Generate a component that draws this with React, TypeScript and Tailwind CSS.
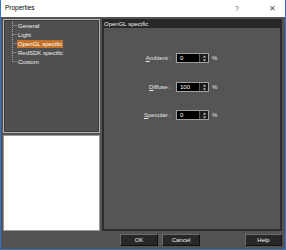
import React from "react";

const font = { fontFamily: '"Liberation Sans", Arial, sans-serif' };

function Spinner() {
  return (
    <div className="flex h-full w-[9px] items-center justify-center border-l border-[#5a5a5a] bg-[#1c1c1c]">
      <svg width="5" height="7" viewBox="0 0 5 7">
        <path d="M2.5 0.5 L4 2.5 L1 2.5 Z" fill="#d0d0d0" />
        <path d="M1 4.5 L4 4.5 L2.5 6.5 Z" fill="#d0d0d0" />
      </svg>
    </div>
  );
}

function Field({ accel, rest, value, mt }: { accel: string; rest: string; value: string; mt: string }) {
  return (
    <div className={`flex h-[10px] items-center ${mt}`}>
      <div className="w-[68px] pr-[1px] text-right text-[6px] leading-none text-[#e6e6e6]">
        <span className="underline">{accel}</span>
        {rest}
      </div>
      <div className="ml-[4px] flex h-[10px] w-[33px] items-stretch border border-[#a0a0a0] bg-black">
        <div className="flex flex-1 items-center pl-[3px] text-[6px] leading-none text-white">{value}</div>
        <Spinner />
      </div>
      <div className="ml-[3px] text-[6px] leading-none text-[#e6e6e6]">%</div>
    </div>
  );
}

function Button({ children, w }: { children: React.ReactNode; w: string }) {
  return (
    <div
      className={`flex h-[12px] ${w} items-center justify-center border border-t-[#6a6a6a] border-l-[#6a6a6a] border-r-[#101010] border-b-[#101010] bg-[#282828] text-[6px] leading-none text-[#f0f0f0]`}
    >
      {children}
    </div>
  );
}

export default function App() {
  const items = ["General", "Light", "OpenGL specific", "RedSDK specific", "Custom"];
  return (
    <div style={font} className="flex h-[250px] w-[286px] flex-col overflow-hidden border-x border-b border-[#2d78c4] bg-white">
      <div className="flex h-[17px] items-center bg-white">
        <div className="ml-[4px] text-[6.5px] leading-none text-black">Properties</div>
        <div className="ml-auto mr-[30px] text-[7px] leading-none text-[#555]">?</div>
        <div className="mr-[9px] text-[8px] leading-none text-[#555]">✕</div>
      </div>
      <div className="flex flex-1 flex-col bg-[#535353] pl-[2px] pr-[3px] pt-[2px]">
        <div className="flex h-[212px] gap-[2px]">
          <div className="flex w-[97px] flex-col gap-[2px]">
            <div className="h-[114px] border border-[#b4b4b4]">
              <div className="relative h-full border border-[#3a3a3a] bg-[#505050]">
                <svg className="absolute left-0 top-0" width="16" height="45" viewBox="0 0 16 45">
                  <g stroke="#a8a8a8" strokeWidth="1" strokeDasharray="1 1" fill="none">
                    <line x1="7.5" y1="0" x2="7.5" y2="40.5" />
                    <line x1="7.5" y1="4.5" x2="12" y2="4.5" />
                    <line x1="7.5" y1="13.5" x2="12" y2="13.5" />
                    <line x1="7.5" y1="22.5" x2="12" y2="22.5" />
                    <line x1="7.5" y1="31.5" x2="12" y2="31.5" />
                    <line x1="7.5" y1="40.5" x2="12" y2="40.5" />
                  </g>
                </svg>
                <div className="flex flex-col pl-[12px]">
                  {items.map((it) => (
                    <div key={it} className="flex h-[9px] items-center">
                      <span
                        className={`px-[1px] text-[6px] leading-[8px] ${
                          it === "OpenGL specific" ? "bg-[#c27228] text-white" : "text-[#ececec]"
                        }`}
                      >
                        {it}
                      </span>
                    </div>
                  ))}
                </div>
              </div>
            </div>
            <div className="flex-1 border border-[#9a9a9a] bg-white"></div>
          </div>
          <div className="flex w-[180px] flex-col">
            <div className="flex h-[9px] items-center bg-[#282828] pl-[2px] text-[6px] leading-none text-[#f0f0f0]">
              OpenGL specific
            </div>
            <div className="flex flex-1 flex-col border-2 border-t-0 border-[#2c2c2c] bg-[#555555] pt-[25px]">
              <Field accel="A" rest="mbient :" value="0" mt="" />
              <Field accel="D" rest="iffuse :" value="100" mt="mt-[19px]" />
              <Field accel="S" rest="pecular :" value="0" mt="mt-[18px]" />
            </div>
          </div>
        </div>
        <div className="mt-[3px] flex">
          <div className="ml-[117px]">
            <Button w="w-[38px]">OK</Button>
          </div>
          <div className="ml-[4px]">
            <Button w="w-[38px]">Cancel</Button>
          </div>
          <div className="ml-auto">
            <Button w="w-[37px]">Help</Button>
          </div>
        </div>
      </div>
    </div>
  );
}
